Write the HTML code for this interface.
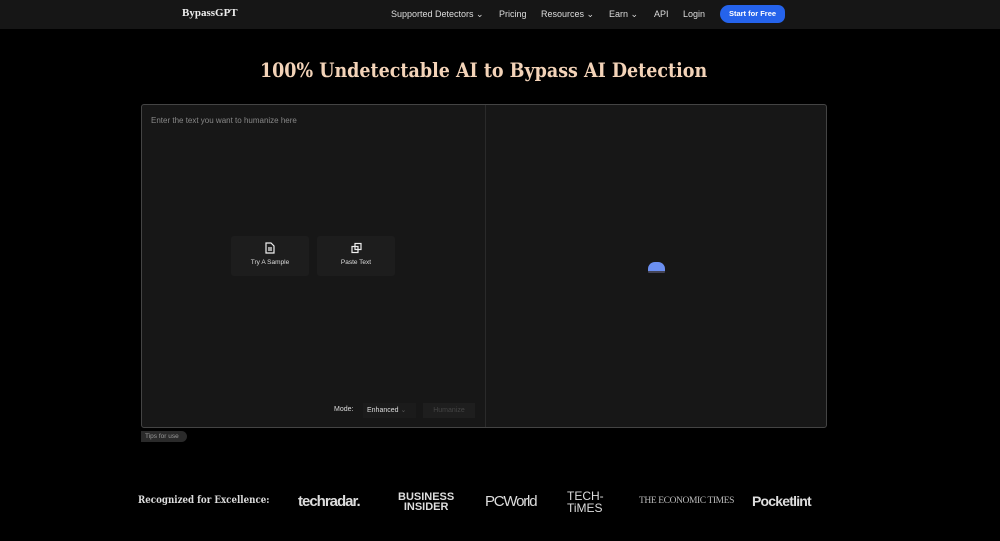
<!DOCTYPE html><html><head><style>
body{margin:0;width:1000px;height:541px;background:#000;font-family:"Liberation Sans",sans-serif;overflow:hidden;position:relative;color:#ddd}
.nav{position:absolute;top:0;left:0;width:1000px;height:29px;background:#161616}
.nav span{position:absolute;top:9px;font-size:9px;color:#ddd}
.logo{left:182px;top:7px!important;font-family:"Liberation Serif",serif;font-weight:bold;font-size:11px!important;color:#eee!important}
.btn{left:720px;top:5px!important;width:65px;height:18px;background:#2563eb;border-radius:9px 7px 7px 9px;color:#fff!important;font-weight:bold;font-size:7.5px!important;line-height:18px;text-align:center}
h1{position:absolute;top:58px;left:0;width:967px;text-align:center;margin:0;font-family:"DejaVu Serif","Liberation Serif",serif;font-weight:bold;font-size:20px;color:#f3d3b8;transform:scaleX(0.875);transform-origin:484px 0}
.box{position:absolute;left:141px;top:104px;width:684px;height:322px;background:#171717;border:1px solid #444;border-radius:3px}
.div{position:absolute;left:343px;top:0;width:1px;height:322px;background:#2a2a2a}
.ph{position:absolute;left:9px;top:11px;font-size:8px;color:#888}
.card{position:absolute;top:131px;width:78px;height:40px;background:#1d1d1d;border-radius:3px;font-size:6.5px;color:#ddd;text-align:center}
.card svg{display:block;margin:6px auto 5px}
.lg{position:absolute;top:491px;color:#ddd;font-weight:bold}
</style></head><body>
<div class="nav">
<span class="logo">BypassGPT</span>
<span style="left:391px">Supported Detectors ⌄</span>
<span style="left:499px">Pricing</span>
<span style="left:541px">Resources ⌄</span>
<span style="left:609px">Earn ⌄</span>
<span style="left:654px">API</span>
<span style="left:683px">Login</span>
<span class="btn">Start for Free</span>
</div>
<h1>100% Undetectable AI to Bypass AI Detection</h1>
<div class="box">
<div class="div"></div>
<div class="ph">Enter the text you want to humanize here</div>
<div class="card" style="left:89px"><svg width="10" height="12" viewBox="0 0 10 12" fill="none" stroke="#eee" stroke-width="1.2"><path d="M1 1h5l3 3v7H1z M3 6h4M3 8h4"/></svg>Try A Sample</div>
<div class="card" style="left:175px"><svg width="11" height="12" viewBox="0 0 11 11" fill="none" stroke="#eee" stroke-width="1.2"><rect x="4" y="1" width="6" height="6"/><rect x="1" y="4" width="6" height="6"/></svg>Paste Text</div>
<div style="position:absolute;left:192px;top:301px;font-size:7px;color:#ddd">Mode:</div>
<div style="position:absolute;left:221px;top:298px;width:53px;height:15px;background:#1b1b1b;font-size:7px;line-height:15px;padding-left:4px;box-sizing:border-box">Enhanced <span style="color:#555">⌄</span></div>
<div style="position:absolute;left:281px;top:298px;width:52px;height:15px;background:#1e1e1e;font-size:7px;line-height:15px;text-align:center;color:#444">Humanize</div>
<div style="position:absolute;left:506px;top:157px;width:17px;height:9px;background:#6b8ff0;border-radius:7px 7px 1px 1px;border-bottom:2px solid #445"></div>
</div>
<div style="position:absolute;left:141px;top:431px;width:46px;height:11px;background:#2a2a2a;border-radius:0 6px 6px 0;font-size:6.5px;line-height:11px;color:#999;padding-left:4px;box-sizing:border-box">Tips for use</div>
<div class="lg" style="left:138px;top:495px;font-family:'DejaVu Serif',serif;font-size:10px;transform:scaleX(0.87);transform-origin:0 0">Recognized for Excellence:</div>
<div class="lg" style="left:298px;top:493px;font-size:15px;letter-spacing:-1px">techradar.</div>
<div class="lg" style="left:398px;top:492px;font-size:11px;line-height:10px;text-align:center">BUSINESS<br>INSIDER</div>
<div class="lg" style="left:485px;top:493px;font-size:15px;font-weight:normal;letter-spacing:-1.2px">PCWorld</div>
<div class="lg" style="left:567px;top:490px;font-size:12px;line-height:12px;font-weight:normal">TECH-<br>TiMES</div>
<div class="lg" style="left:639px;top:496px;font-family:'Liberation Serif',serif;font-size:9.5px;font-weight:normal;color:#bbb;letter-spacing:-0.4px">THE ECONOMIC TIMES</div>
<div class="lg" style="left:752px;top:493px;font-size:14px;letter-spacing:-0.8px">Pocketlint</div>
</body></html>
